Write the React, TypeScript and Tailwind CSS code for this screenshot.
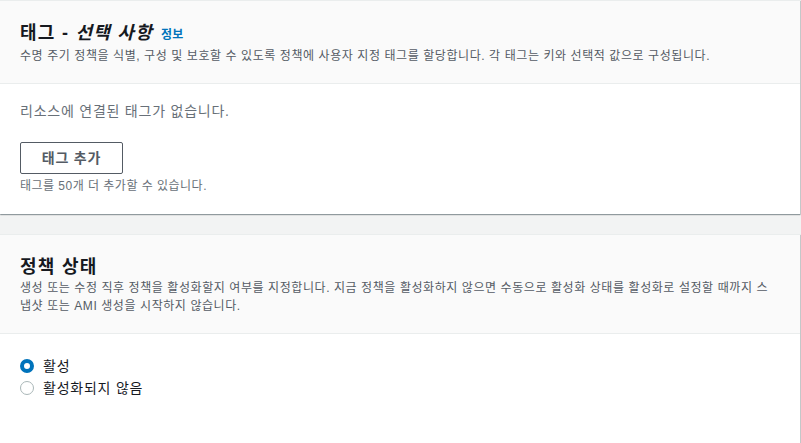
import { useState } from 'react';

const font = 'font-["Liberation_Sans","Noto_Sans_CJK_KR",sans-serif]';
const cardShadow =
  'shadow-[0_1px_1px_0_rgba(0,28,36,0.3),1px_1px_1px_0_rgba(0,28,36,0.15)]';

export default function App() {
  const [enabled, setEnabled] = useState(true);

  return (
    <div className={`min-h-[443px] w-[801px] bg-[#f2f3f3] ${font} text-[#16191f]`}>
      <section className={`w-[800px] border-t border-[#eaeded] bg-white ${cardShadow}`}>
        <header className="border-b border-[#eaeded] bg-[#fafafa] px-5 pb-[18px] pt-[21px]">
          <h2 className="flex items-baseline text-[18px] font-bold leading-[22px] tracking-[0.07em]">
            <span>
              태그 - <i>선택 사항</i>
            </span>
            <a className="ml-2 text-[12px] font-bold tracking-[0.03em] text-[#0073bb]">정보</a>
          </h2>
          <p className="mt-px text-[12px] leading-[18px] tracking-[0.048em] text-[#545b64]">
            수명 주기 정책을 식별, 구성 및 보호할 수 있도록 정책에 사용자 지정 태그를 할당합니다. 각
            태그는 키와 선택적 값으로 구성됩니다.
          </p>
        </header>
        <div className="px-5 pb-[19px] pt-[16px]">
          <p className="text-[14px] leading-[22px] tracking-[0.055em] text-[#687078]">
            리소스에 연결된 태그가 없습니다.
          </p>
          <button
            type="button"
            className="mt-[20px] h-[32px] w-[103px] rounded-[2px] border border-[#545b64] text-[14px] font-bold tracking-[0.055em] text-[#545b64]"
          >
            태그 추가
          </button>
          <p className="mt-[3px] text-[12px] leading-[18px] tracking-[0.04em] text-[#687078]">
            태그를 50개 더 추가할 수 있습니다.
          </p>
        </div>
      </section>

      <section className={`mt-5 w-[800px] border-t border-[#eaeded] bg-white ${cardShadow}`}>
        <header className="border-b border-[#eaeded] bg-[#fafafa] px-5 pb-[18px] pt-[21px]">
          <h2 className="text-[18px] font-bold leading-[22px] tracking-[0.07em]">정책 상태</h2>
          <p className="mt-px whitespace-nowrap text-[12px] leading-[18px] tracking-[0.048em] text-[#545b64]">
            생성 또는 수정 직후 정책을 활성화할지 여부를 지정합니다. 지금 정책을 활성화하지 않으면
            수동으로 활성화 상태를 활성화로 설정할 때까지 스
            <br />
            냅샷 또는 AMI 생성을 시작하지 않습니다.
          </p>
        </header>
        <div className="flex flex-col px-5 pb-[44px] pt-[21px]">
          <Radio label="활성" checked={enabled} onSelect={() => setEnabled(true)} />
          <Radio label="활성화되지 않음" checked={!enabled} onSelect={() => setEnabled(false)} />
        </div>
      </section>
    </div>
  );
}

function Radio({
  label,
  checked,
  onSelect,
}: {
  label: string;
  checked: boolean;
  onSelect: () => void;
}) {
  return (
    <label
      className="flex cursor-pointer items-center gap-[9px] text-[14px] leading-[22px] tracking-[0.055em] text-[#16191f]"
      onClick={onSelect}
    >
      <span
        className={`inline-block h-[14px] w-[14px] shrink-0 rounded-full bg-white ${
          checked ? 'border-[4px] border-[#0073bb]' : 'border border-[#aab7b8]'
        }`}
      />
      {label}
    </label>
  );
}
